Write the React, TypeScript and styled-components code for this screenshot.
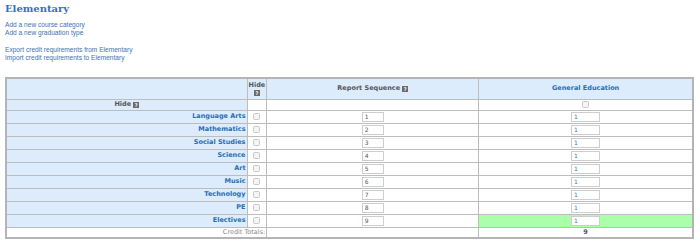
import React from 'react';
import styled, { createGlobalStyle } from 'styled-components';

const GlobalStyle = createGlobalStyle`
    body {
        margin: 0;
        background: #ffffff;
        font-family: "Liberation Sans", Arial, sans-serif;
    }
`

const Page = styled.div`
    padding: 3px 5px 0 5px;
`

const Title = styled.h2`
    margin: 0;
    font-family: "DejaVu Serif", serif;
    font-weight: bold;
    font-size: 10px;
    line-height: 12px;
    color: #2f73bd;
`

const LinkGroup = styled.div<{ $top: number }>`
    display: flex;
    flex-direction: column;
    margin-top: ${props => props.$top}px;
`

const Link = styled.a`
    font-size: 6.6px;
    line-height: 8.3px;
    color: #3d73b6;
    text-decoration: none;
    cursor: pointer;
`

const Table = styled.table`
    margin-top: 14.6px;
    width: 689px;
    border-collapse: collapse;
    border: 2px solid #b4b4b4;
    font-family: "DejaVu Sans", Verdana, sans-serif;
    font-size: 6.5px;
`

const Row = styled.tr<{ $h: number }>`
    height: ${props => props.$h}px;
`

const Cell = styled.td<{ $bg?: string; $align?: string }>`
    border: 1px solid #bdbdbd;
    padding: 0 1px;
    background: ${props => props.$bg || '#ffffff'};
    text-align: ${props => props.$align || 'center'};
    vertical-align: middle;
    line-height: 7px;
    color: #555555;
`

const Label = styled.span`
    font-weight: bold;
    color: #2a6db3;
`

const HeadText = styled.span<{ $blue?: boolean }>`
    font-weight: bold;
    color: ${props => props.$blue ? '#2a6db3' : '#555555'};
`

const Help = styled.span<{ $gap?: number }>`
    display: inline-block;
    width: 6px;
    height: 6px;
    margin-left: ${props => props.$gap ?? 2}px;
    background: #6b6b6b;
    color: #ffffff;
    font-size: 5px;
    line-height: 6px;
    text-align: center;
    font-weight: bold;
    vertical-align: -1px;
`

const Check = styled.span`
    display: inline-block;
    width: 5px;
    height: 5px;
    border: 1px solid #c8c8c8;
    border-radius: 1.5px;
    background: #f4f4f4;
    vertical-align: middle;
`

const NumBox = styled.input<{ $w: number; $blue?: boolean }>`
    box-sizing: border-box;
    width: ${props => props.$w}px;
    height: 10px;
    padding: 0 0 0 2px;
    margin: 0;
    border: 1px solid #cdcdcd;
    font-family: "DejaVu Sans", Verdana, sans-serif;
    font-size: 6px;
    color: ${props => props.$blue ? '#3d73b6' : '#555555'};
    background: #ffffff;
    vertical-align: middle;
`

const Totals = styled.span`
    color: #8a8a8a;
`

const BLUE = '#dcecfd';
const GREEN = '#aaffaa';

const subjects = ['Language Arts', 'Mathematics', 'Social Studies', 'Science', 'Art', 'Music', 'Technology', 'PE', 'Electives'];

export default function App() {
    return (
        <Page>
            <GlobalStyle />
            <Title>Elementary</Title>
            <LinkGroup $top={6}>
                <Link>Add a new course category</Link>
                <Link>Add a new graduation type</Link>
            </LinkGroup>
            <LinkGroup $top={8.3}>
                <Link>Export credit requirements from Elementary</Link>
                <Link>Import credit requirements to Elementary</Link>
            </LinkGroup>
            <Table>
                <colgroup>
                    <col style={{ width: 241 }} />
                    <col style={{ width: 16 }} />
                    <col style={{ width: 212 }} />
                    <col />
                </colgroup>
                <tbody>
                    <Row $h={21}>
                        <Cell $bg={BLUE}></Cell>
                        <Cell $bg={BLUE}>
                            <HeadText>Hide</HeadText>
                            <br />
                            <Help $gap={0}>?</Help>
                        </Cell>
                        <Cell $bg={BLUE}><HeadText>Report Sequence</HeadText><Help>?</Help></Cell>
                        <Cell $bg={BLUE}><HeadText $blue>General Education</HeadText></Cell>
                    </Row>
                    <Row $h={11}>
                        <Cell $bg={BLUE}><HeadText>Hide</HeadText><Help>?</Help></Cell>
                        <Cell></Cell>
                        <Cell></Cell>
                        <Cell><Check /></Cell>
                    </Row>
                    {subjects.map((name, i) => (
                        <Row $h={13} key={name}>
                            <Cell $bg={BLUE} $align="right"><Label>{name}</Label></Cell>
                            <Cell><Check /></Cell>
                            <Cell><NumBox $w={22} defaultValue={String(i + 1)} /></Cell>
                            <Cell $bg={name === 'Electives' ? GREEN : undefined}><NumBox $w={29} $blue defaultValue="1" /></Cell>
                        </Row>
                    ))}
                    <Row $h={10.5}>
                        <Cell colSpan={2} $align="right"><Totals>Credit Totals:</Totals></Cell>
                        <Cell></Cell>
                        <Cell><HeadText>9</HeadText></Cell>
                    </Row>
                </tbody>
            </Table>
        </Page>
    );
}
